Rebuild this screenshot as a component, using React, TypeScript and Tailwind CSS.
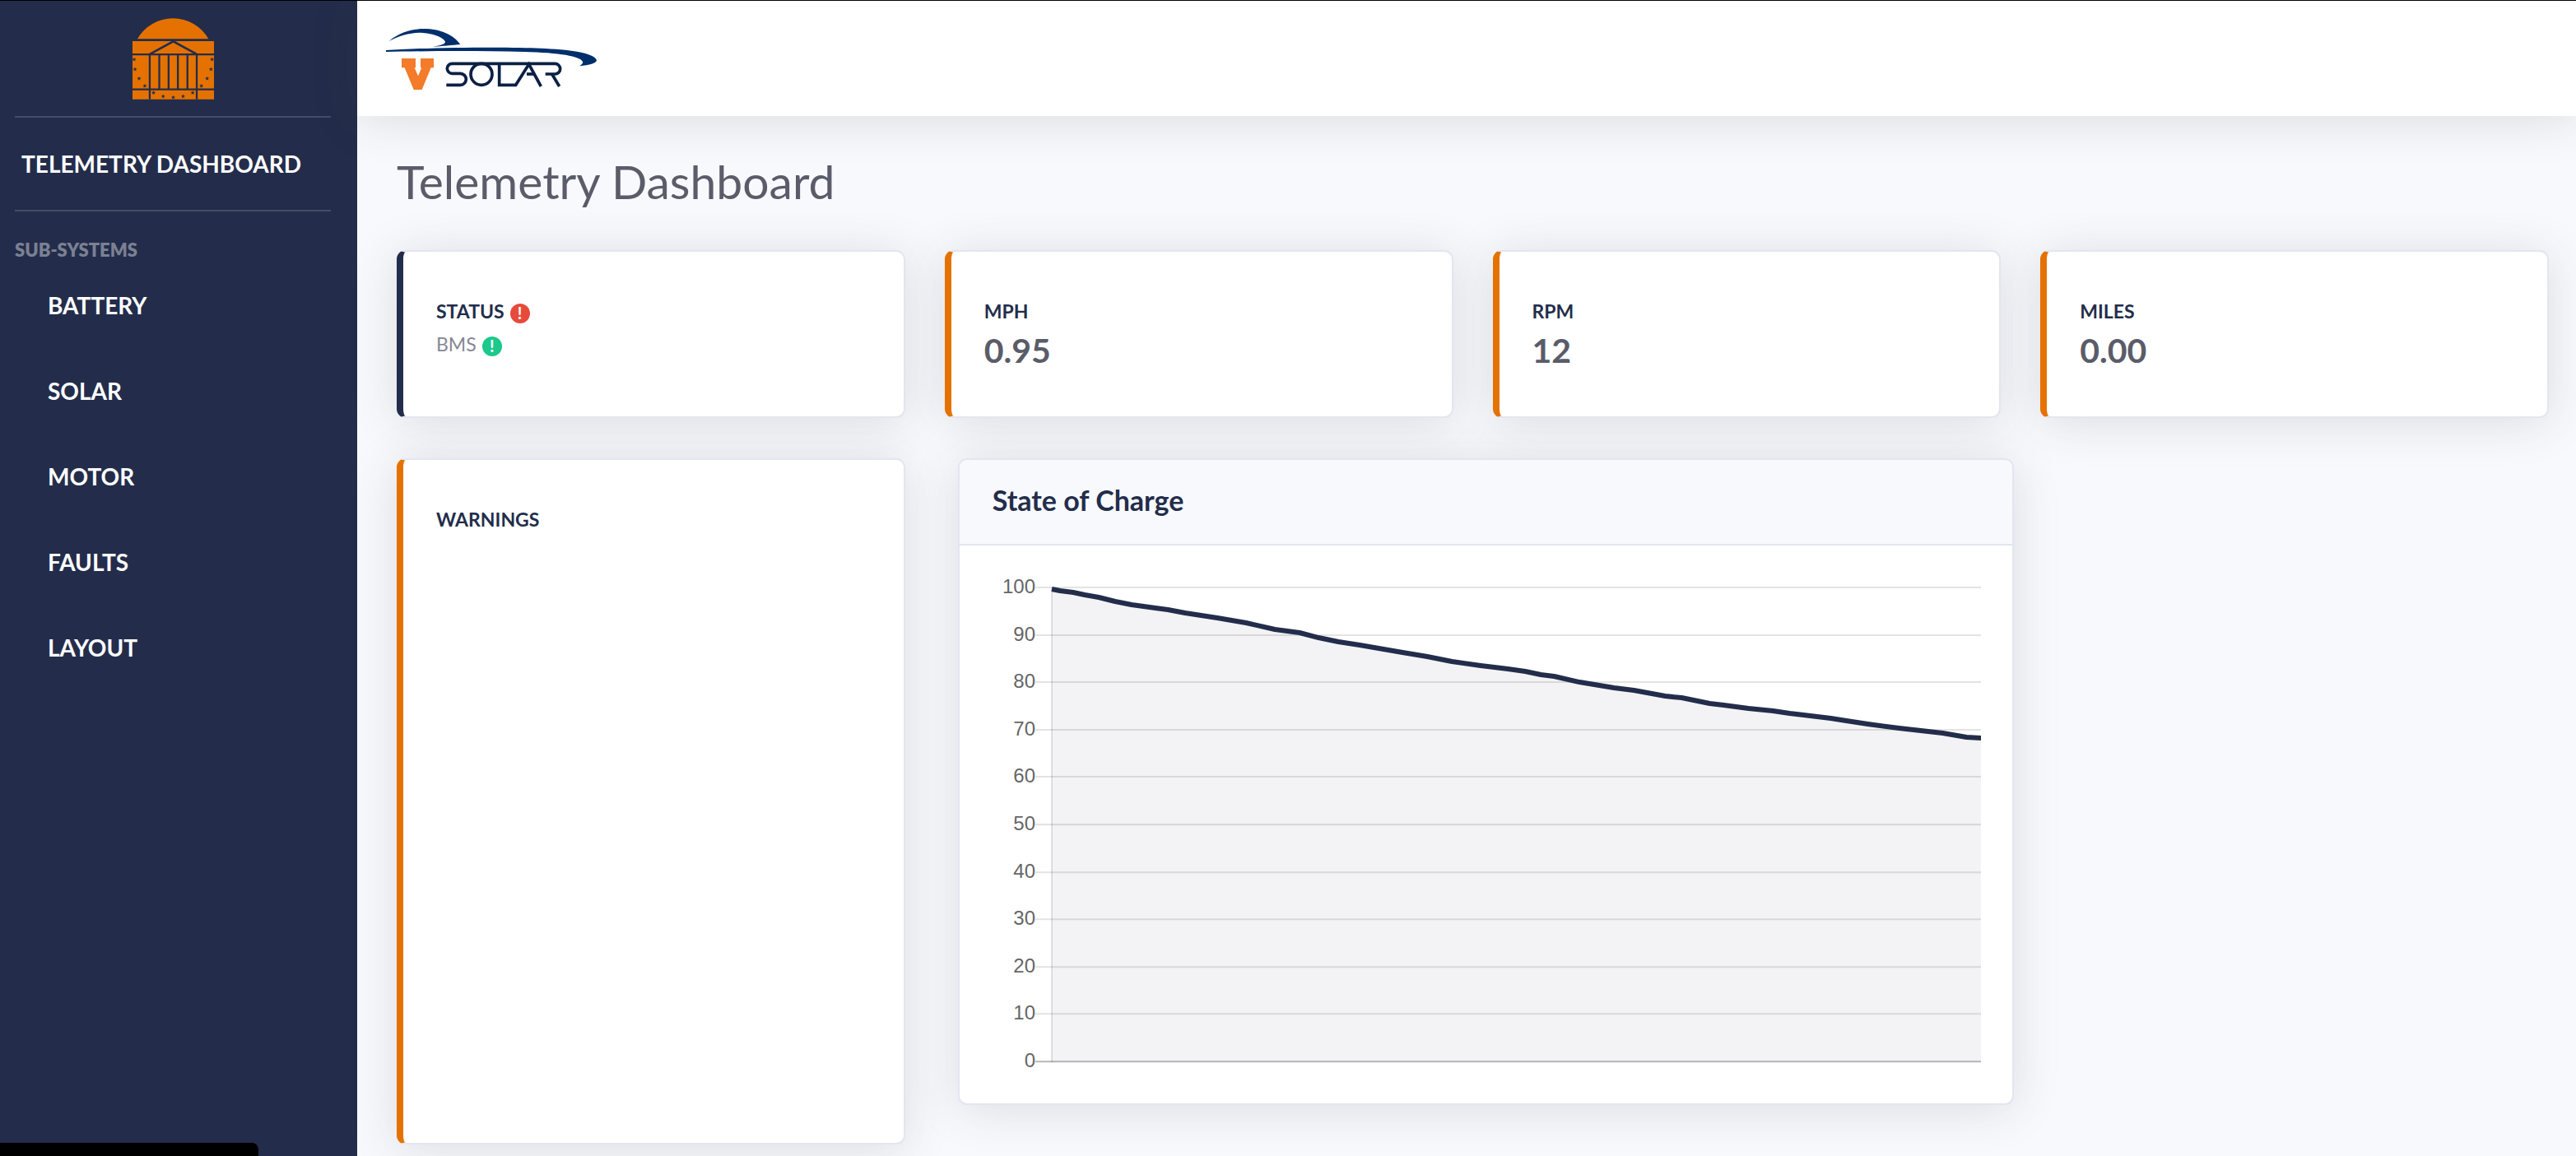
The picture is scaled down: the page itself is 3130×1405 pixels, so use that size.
import type { ReactNode } from 'react';

const SUBSYSTEMS = ['Battery', 'Solar', 'Motor', 'Faults', 'Layout'];

const STARS: [number, number][] = [
  [68, 215], [71, 251], [86, 285], [107, 312], [139, 337], [174, 350], [211, 354],
  [247, 350], [282, 337], [314, 312], [335, 285], [349, 251], [353, 215],
];

const STAR_PATH = 'M0 -8L2 -2.6H8L3.2 1L5 7L0 3.4L-5 7L-3.2 1L-8 -2.6H-2Z';

function RotundaLogo() {
  return (
    <svg viewBox="62 64 298 298" className="size-[99px]" role="img" aria-label="Rotunda">
      <g fill="#e57200">
        <path d="M80 140A150 150 0 0 1 340 140Z" />
        <path d="M62 148H360V361H62Z" />
      </g>
      <g stroke="#232d4b" strokeWidth="7" fill="none">
        <path d="M62 197H360M62 325H360" />
        <path d="M125 196L211 149L297 196" strokeWidth="8" />
        <path d="M125 197V361M297 197V361M160 197V325M194 197V325M228 197V325M263 197V325" />
      </g>
      <g fill="#232d4b">
        {STARS.map(([x, y]) => (
          <path key={`${x}-${y}`} d={STAR_PATH} transform={`translate(${x} ${y})`} />
        ))}
      </g>
    </svg>
  );
}

function SolarLogo() {
  return (
    <svg viewBox="0 0 900 306" className="h-[102px] w-[300px]" role="img" aria-label="V Solar">
      <g fill="#002f6c">
        <path d="M68 90C108 56 152 45 195 45C255 45 305 68 328 102C300 104 260 109 228 110C250 106 273 102 273 92C264 72 215 59 178 59C140 60 100 72 68 90Z" />
        <path d="M57 123C200 113 500 110 620 116C720 120 820 132 825 160C824 171 798 178 762 181C770 176 776 171 774 165C765 145 690 132 560 129C400 125 200 126 57 129Z" />
      </g>
      <path
        fill="#f47b2a"
        d="M114 153H165V187H161L174 217L187 187H183V153H231V187H221L188 267H158L125 187H114Z"
      />
      <g fill="none" stroke="#0b2044" strokeWidth="11">
        <path d="M277 250H328A21 21 0 0 0 328 208H298A18 18 0 0 1 298 172H673A19 19 0 0 1 673 210H638" />
        <path d="M662 210L689 255" />
        <ellipse cx="405" cy="211" rx="39" ry="39" />
        <path d="M470 172V250H530L578 174L622 255" />
        <path d="M570 210H600" />
      </g>
    </svg>
  );
}

function Badge({ tone }: { tone: string }) {
  return (
    <span
      className={`mt-[6px] flex size-6 items-center justify-center rounded-full pb-0.5 text-xl leading-none font-bold text-white ${tone}`}
    >
      !
    </span>
  );
}

function Card({ accent, className = '', children }: { accent: string; className?: string; children: ReactNode }) {
  return (
    <section
      className={`rounded-[11px] border-2 border-l-8 border-[#e3e6f0] bg-white px-10 py-[52px] shadow-[0_5px_56px_rgba(58,59,69,0.15)] ${accent} ${className}`}
    >
      {children}
    </section>
  );
}

function Label({ children }: { children: ReactNode }) {
  return <h2 className="flex items-center gap-[7px] text-[23px] leading-10 font-bold text-[#232d4b] uppercase">{children}</h2>;
}

function Stat({ label, value }: { label: string; value: string }) {
  return (
    <Card accent="border-l-[#e57200]">
      <Label>{label}</Label>
      <p className="text-[41px] leading-[56px] font-bold text-[#5a5c69]">{value}</p>
    </Card>
  );
}

const PLOT = { left: 74, right: 1203, top: 13, bottom: 589 };

const CHARGE: [number, number][] = [
  [74, 15], [84, 17], [100, 19], [114, 22], [131, 25], [151, 30], [171, 34], [200, 38],
  [215, 40], [236, 44], [275, 50], [310, 56], [345, 64], [375, 68], [398, 74], [422, 79],
  [448, 83], [500, 92], [530, 97], [560, 103], [595, 108], [628, 112], [649, 115],
  [668, 119], [684, 121], [715, 128], [757, 135], [781, 138], [819, 145], [839, 147],
  [873, 154], [890, 156], [920, 160], [950, 163], [970, 166], [987, 168], [1020, 172],
  [1039, 175], [1065, 179], [1103, 184], [1156, 190], [1185, 195], [1203, 196],
];

function ChargeChart() {
  const line = CHARGE.map(([x, y]) => `${x},${y}`).join(' ');
  const ticks = Array.from({ length: 11 }, (_, i) => 100 - i * 10);
  return (
    <svg viewBox="0 0 1203 602" className="block w-full" role="img" aria-label="State of charge over time">
      {ticks.map((t) => {
        const y = Math.round(PLOT.bottom - ((PLOT.bottom - PLOT.top) * t) / 100);
        return (
          <g key={t}>
            <path
              d={`M54 ${y}H${PLOT.right}`}
              stroke="#000"
              strokeOpacity={t === 0 ? 0.28 : 0.11}
              strokeWidth="2"
            />
            <text x="54" y={y + 7} textAnchor="end" fontSize="24" fontFamily="Liberation Sans, Arial, sans-serif" fill="#666">
              {t}
            </text>
          </g>
        );
      })}
      <path d={`M${PLOT.left} ${PLOT.top}V${PLOT.bottom + 1}`} stroke="#000" strokeOpacity="0.11" strokeWidth="2" />
      <polygon
        points={`${PLOT.left},${PLOT.bottom} ${line} ${PLOT.right},${PLOT.bottom}`}
        fill="#232d4b"
        fillOpacity="0.055"
      />
      <polyline points={line} fill="none" stroke="#232d4b" strokeWidth="6" strokeLinejoin="round" />
    </svg>
  );
}

export default function App() {
  return (
    <div className="flex min-h-screen border-t border-black bg-[#f8f9fc] font-[Lato,sans-serif]">
      <aside className="w-[434px] shrink-0 bg-[#232d4b] pr-8 pl-[18px] text-white">
        <a href="#home" className="flex h-[140px] items-center justify-center">
          <RotundaLogo />
        </a>
        <hr className="border-t-2 border-[#444d66]" />
        <a href="#dashboard" className="flex h-28 items-center pl-2 text-[28px] font-bold whitespace-nowrap uppercase">
          Telemetry Dashboard
        </a>
        <hr className="border-t-2 border-[#444d66]" />
        <h2 className="pt-8 text-[22px] leading-[30px] font-extrabold text-[#7b8193] uppercase">Sub-systems</h2>
        <nav>
          {SUBSYSTEMS.map((name) => (
            <a
              key={name}
              href={`#${name.toLowerCase()}`}
              className="flex h-[104px] items-center pl-10 text-[28px] font-bold uppercase"
            >
              {name}
            </a>
          ))}
        </nav>
      </aside>

      <div className="min-w-0 flex-1">
        <header className="flex h-[140px] items-center bg-white pl-4 shadow-[0_5px_56px_rgba(58,59,69,0.15)]">
          <a href="#top">
            <SolarLogo />
          </a>
        </header>

        <main className="pt-12 pr-[33px] pb-3 pl-12">
          <h1 className="mb-[53px] text-[57px] leading-[62px] font-normal text-[#5a5c69]">Telemetry Dashboard</h1>

          <div className="grid grid-cols-4 gap-12">
            <Card accent="border-l-[#232d4b]">
              <Label>
                Status
                <Badge tone="bg-[#e74a3b]" />
              </Label>
              <p className="flex items-center gap-[7px] text-[23px] leading-10 font-normal text-[#858796]">
                BMS
                <Badge tone="bg-[#1cc88a]" />
              </p>
            </Card>
            <Stat label="MPH" value="0.95" />
            <Stat label="RPM" value="12" />
            <Stat label="Miles" value="0.00" />
          </div>

          <div className="mt-[49px] flex items-start gap-16">
            <Card accent="border-l-[#e57200]" className="min-h-[834px] w-[calc((100%-144px)/4)] shrink-0">
              <Label>Warnings</Label>
            </Card>
            <section className="w-[calc(50%-24px)] overflow-hidden rounded-[11px] border-2 border-[#e3e6f0] bg-white shadow-[0_5px_56px_rgba(58,59,69,0.15)]">
              <h2 className="border-b-2 border-[#e3e6f0] bg-[#f8f9fc] px-10 pb-1 text-[34px] leading-[98px] font-bold text-[#232d4b]">
                State of Charge
              </h2>
              <div className="p-[38px]">
                <ChargeChart />
              </div>
            </section>
          </div>
        </main>
      </div>

      <div className="fixed bottom-0 left-0 h-4 w-[314px] rounded-tr-lg bg-black" />
    </div>
  );
}
